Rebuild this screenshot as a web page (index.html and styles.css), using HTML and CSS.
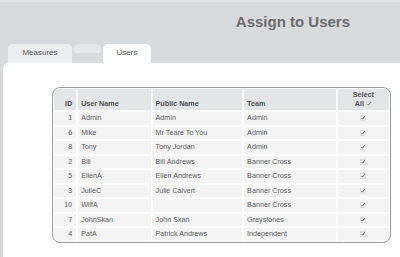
FILE: index.html
```html
<!DOCTYPE html>
<html lang="en">
<head>
    <meta charset="UTF-8">
    <meta name="viewport" content="width=device-width, initial-scale=1.0">
    <title>Assign to Users</title>
    <link rel="stylesheet" href="styles.css">
</head>
<body>
    <header class="page-header">
        <h1>Assign to Users</h1>
    </header>

    <nav class="tabs">
        <span class="tab">Measures</span>
        <span class="tab tab-blank"></span>
        <span class="tab tab-active">Users</span>
    </nav>

    <div class="panel">
        <div class="grid-box">
            <table class="user-grid">
                <colgroup>
                    <col class="col-id">
                    <col class="col-user">
                    <col class="col-public">
                    <col class="col-team">
                    <col class="col-select">
                </colgroup>
                <thead>
                    <tr>
                        <th class="num">ID</th>
                        <th>User Name</th>
                        <th>Public Name</th>
                        <th>Team</th>
                        <th class="select">Select<br>All <span class="check"></span></th>
                    </tr>
                </thead>
                <tbody id="rows">
                    <!-- rows filled in below -->
                </tbody>
            </table>
        </div>
    </div>

    <script>
        const users = [
            { id: 1, user: "Admin", name: "Admin", team: "Admin" },
            { id: 6, user: "Mike", name: "Mr Teare To You", team: "Admin" },
            { id: 8, user: "Tony", name: "Tony Jordan", team: "Admin" },
            { id: 2, user: "Bill", name: "Bill Andrews", team: "Banner Cross" },
            { id: 5, user: "EllenA", name: "Ellen Andrews", team: "Banner Cross" },
            { id: 3, user: "JulieC", name: "Julie Calvert", team: "Banner Cross" },
            { id: 10, user: "WilfA", name: "", team: "Banner Cross" },
            { id: 7, user: "JohnSkan", name: "John Skan", team: "Greystones" },
            { id: 4, user: "PatA", name: "Patrick Andrews", team: "Independent" }
        ];

        const tick = '<svg width="6" height="6" viewBox="0 0 6 6"><rect x="0.5" y="0.5" width="5" height="5" fill="#efefef" stroke="#cfcfcf" stroke-width="0.5"/><path d="M1.5 3.1 L2.5 4.2 L4.7 1.3" fill="none" stroke="#555" stroke-width="0.9"/></svg>';

        document.querySelectorAll(".check").forEach(el => el.innerHTML = tick);

        const body = document.getElementById("rows");
        users.forEach(u => {
            const tr = document.createElement("tr");
            tr.innerHTML = `
                <td class="num">${u.id}</td>
                <td>${u.user}</td>
                <td>${u.name}</td>
                <td>${u.team}</td>
                <td class="select"><span class="check">${tick}</span></td>
            `;
            body.appendChild(tr);
        });
    </script>
</body>
</html>
```

FILE: styles.css
```css
body {
    font-family: 'Liberation Sans', Arial, sans-serif;
    margin: 0;
    padding: 0;
    background-color: #d9dadd;
    border-top: 2px solid #e3e4e7;
    overflow: hidden;
}

.page-header {
    height: 42px;
    box-sizing: border-box;
    padding-top: 12px;
    text-align: right;
    padding-right: 50px;
}

.page-header h1 {
    margin: 0;
    font-size: 15px;
    line-height: 15px;
    color: #6a6a6f;
}

/* tabs */
.tabs {
    display: flex;
    align-items: flex-start;
    gap: 2px;
    padding-left: 8px;
    height: 19px;
}

.tab {
    display: block;
    box-sizing: border-box;
    height: 19px;
    padding-top: 4px;
    font-size: 8px;
    line-height: 10px;
    color: #555;
    text-align: center;
    background-color: #eceef0;
    border-radius: 5px 5px 0 0;
    width: 64px;
}

.tab-blank {
    width: 27px;
    height: 9px;
    background-color: #e7e8eb;
}

.tab-active {
    width: 48px;
    background-color: white;
}

/* content */
.panel {
    background: white;
    margin-left: 3px;
    border-top-left-radius: 6px;
    padding: 24px 9px 0 49px;
    height: 170px;
}

.grid-box {
    border: 1px solid #9c9c9c;
    border-radius: 8px;
    overflow: hidden;
    width: 337px;
}

.user-grid {
    table-layout: fixed;
    width: 339px;
    margin: -1px;
    border-collapse: separate;
    border-spacing: 2px;
    font-size: 7.2px;
    color: #5e5e5e;
}

.col-id { width: 22px; }
.col-user { width: 72px; }
.col-public { width: 89px; }
.col-team { width: 91px; }
.col-select { width: 51px; }

.user-grid th {
    background-color: #e4e5e7;
    height: 21px;
    padding: 0 3px 2px;
    box-sizing: border-box;
    vertical-align: bottom;
    text-align: left;
    font-weight: bold;
    line-height: 9px;
    color: #505050;
}

.user-grid td {
    background-color: #f3f3f4;
    height: 12.5px;
    padding: 0 3px;
    line-height: 12px;
    white-space: nowrap;
}

.user-grid .num {
    text-align: right;
    padding-right: 4px;
}

.user-grid .select {
    text-align: center;
}

.check {
    display: inline-block;
    width: 6px;
    height: 6px;
    vertical-align: middle;
}

.check svg {
    display: block;
}
```
